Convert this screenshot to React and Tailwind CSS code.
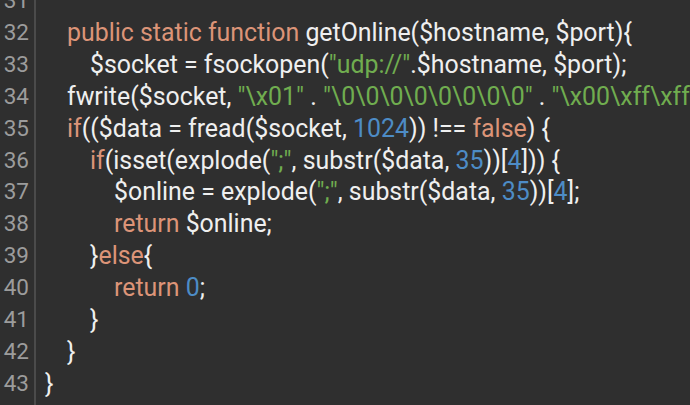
import React from 'react';

const C = {
  k: 'text-[#dc9478]',
  s: 'text-[#70ad4f]',
  n: 'text-[#4d8cc6]',
  t: 'text-[#efefef]',
};

// [lineNumber, indentClass, tokens]
const lines = [
  [31, 'pl-0', []],
  [32, 'pl-[22px]', [['k', 'public static function'], ['t', ' getOnline($hostname, $port){']]],
  [33, 'pl-[45px]', [['t', '$socket = fsockopen('], ['s', '"udp://"'], ['t', '.$hostname, $port);']]],
  [34, 'pl-[22px]', [['t', 'fwrite($socket, '], ['s', '"\\x01"'], ['t', ' . '], ['s', '"\\0\\0\\0\\0\\0\\0\\0\\0"'], ['t', ' . '], ['s', '"\\x00\\xff\\xff\\x00\\xfe\\xfe\\xfe\\xfe\\xfd"'], ['t', ');']]],
  [35, 'pl-[22px]', [['k', 'if'], ['t', '(($data = fread($socket, '], ['n', '1024'], ['t', ')) !== '], ['k', 'false'], ['t', ') {']]],
  [36, 'pl-[45px]', [['k', 'if'], ['t', '(isset(explode('], ['s', '";"'], ['t', ', substr($data, '], ['n', '35'], ['t', '))['], ['n', '4'], ['t', '])) {']]],
  [37, 'pl-[69px]', [['t', '$online = explode('], ['s', '";"'], ['t', ', substr($data, '], ['n', '35'], ['t', '))['], ['n', '4'], ['t', '];']]],
  [38, 'pl-[69px]', [['k', 'return'], ['t', ' $online;']]],
  [39, 'pl-[45px]', [['t', '}'], ['k', 'else'], ['t', '{']]],
  [40, 'pl-[69px]', [['k', 'return'], ['t', ' '], ['n', '0'], ['t', ';']]],
  [41, 'pl-[45px]', [['t', '}']]],
  [42, 'pl-[22px]', [['t', '}']]],
  [43, 'pl-0', [['t', '}']]],
];

export default function App() {
  return (
    <div className="w-[690px] h-[405px] overflow-hidden bg-[#2f2f2f] flex font-['Roboto',sans-serif] leading-[31.9px]">
      <div className="w-[36px] shrink-0 border-r-2 border-[#4b4b4b] -mt-[15px] pr-[5px] text-right text-[22.5px] text-[#9c9c9c]">
        {lines.map(([num]) => (
          <div key={num}>{num}</div>
        ))}
      </div>
      <div className="flex-1 min-w-0 -mt-[15px] pl-[9px] whitespace-pre overflow-hidden text-[24.9px]">
        {lines.map(([num, indent, tokens]) => (
          <div key={num} className={indent}>
            {tokens.length === 0 ? '\u00a0' : tokens.map(([type, text], i) => (
              <span key={i} className={C[type]}>{text}</span>
            ))}
          </div>
        ))}
      </div>
    </div>
  );
}
